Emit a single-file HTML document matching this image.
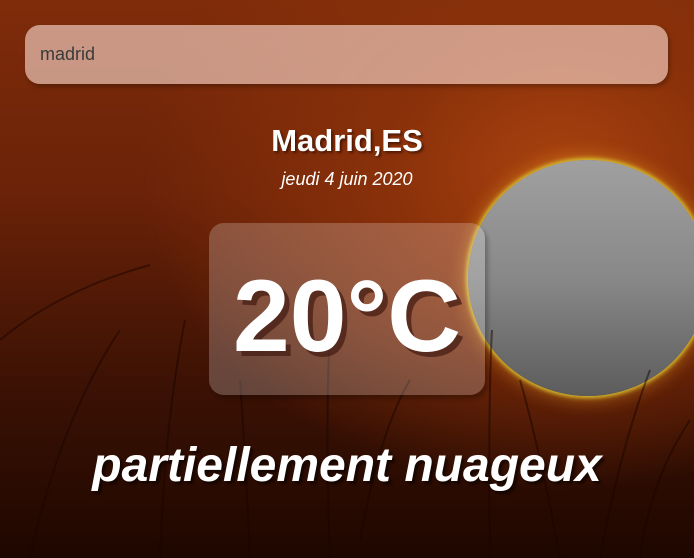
<!DOCTYPE html>
<html><head><meta charset="utf-8"><style>
html,body{margin:0;padding:0;width:694px;height:558px;overflow:hidden}
body{position:relative;font-family:"Liberation Sans",sans-serif;
background:radial-gradient(ellipse 420px 320px at 560px 170px,#a9420f 0%,#8a310a 40%,rgba(110,35,8,0) 100%),
linear-gradient(180deg,#7f2c0a 0%,#6a2208 35%,#3d1204 68%,#1e0700 100%);}
.sun{position:absolute;left:468px;top:160px;width:240px;height:236px;border-radius:50%;
background:linear-gradient(180deg,#a0a0a0 0%,#888 50%,#5c5c5c 100%);
box-shadow:0 0 4px 2px #d8c030,0 0 16px 6px rgba(220,140,30,.45)}
svg{position:absolute;left:0;top:0}
.search{position:absolute;left:25px;top:25px;width:643px;height:59px;border-radius:15px;background:rgba(255,225,215,.6);box-shadow:2px 3px 4px rgba(0,0,0,.25)}
.search span{position:absolute;left:15px;top:19px;font-size:18px;color:#3a3a3a}
.city{position:absolute;left:0;width:694px;top:123px;text-align:center;color:#fff;font-weight:bold;font-size:31px;text-shadow:2px 2px 2px rgba(40,10,0,.6)}
.date{position:absolute;left:0;width:694px;top:169px;text-align:center;color:#fff;font-style:italic;font-size:18px}
.box{position:absolute;left:209px;top:223px;width:276px;height:172px;border-radius:15px;background:rgba(255,255,255,.22);box-shadow:3px 4px 4px rgba(0,0,0,.25)}
.temp{position:absolute;left:209px;width:276px;top:258px;text-align:center;color:#fff;font-weight:bold;font-size:102px;line-height:116px;text-shadow:5px 5px 0 rgba(70,30,20,.75)}
.desc{position:absolute;left:0;width:694px;top:438px;text-align:center;color:#fff;font-style:italic;font-weight:bold;font-size:48px;text-shadow:3px 3px 2px rgba(0,0,0,.5)}
</style></head><body>
<div class="sun"></div>
<svg width="694" height="558" viewBox="0 0 694 558">
<g stroke="#1a0500" stroke-width="2" fill="none" opacity=".5">
<path d="M0 340 Q60 290 150 265"/><path d="M30 558 Q60 420 120 330"/>
<path d="M160 558 Q165 420 185 320"/><path d="M250 558 Q245 450 240 380"/>
<path d="M330 558 Q325 420 330 330"/><path d="M360 540 Q380 430 410 380"/>
<path d="M490 558 Q488 400 492 330"/><path d="M560 558 Q540 450 520 380"/>
<path d="M600 558 Q620 450 650 370"/><path d="M640 558 Q650 480 690 420"/>
</g></svg>
<div class="search"><span>madrid</span></div>
<div class="city">Madrid,ES</div>
<div class="date">jeudi 4 juin 2020</div>
<div class="box"></div>
<div class="temp">20°C</div>
<div class="desc">partiellement nuageux</div>
</body></html>
